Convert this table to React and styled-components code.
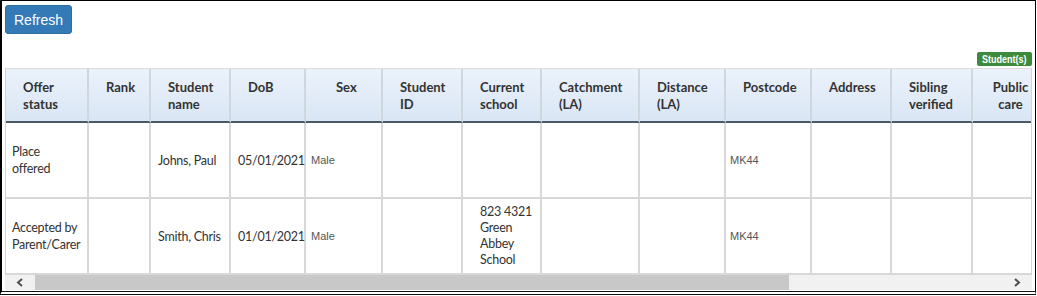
import React from "react";
import styled, { createGlobalStyle } from "styled-components";

const Global = createGlobalStyle`
  html, body { margin: 0; padding: 0; background: #fff; }
  * { box-sizing: border-box; }
`;

const Frame = styled.div`
  width: 1036px; height: 295px;
  border-left: 2px solid #000; border-top: 1px solid #000; border-right: 1px solid #000;
  border-bottom: 4px double #111;
  padding: 4px 3px 0 3px;
  display: flex; flex-direction: column;
  font-family: Lato, "Open Sans", sans-serif;
`;
const Toolbar = styled.div` display: flex; flex-shrink: 0; `;
const Button = styled.button`
  height: 29px; width: 67px; padding: 0;
  background: #337ab7; border: 1px solid #2e6da4; border-radius: 3px;
  color: #fff; font-family: "Liberation Sans", Arial, sans-serif; font-size: 14px;
  cursor: pointer;
`;
const BadgeRow = styled.div` display: flex; justify-content: flex-end; margin: 18px 0 3px; height: 13px; flex-shrink: 0; `;
const Badge = styled.span`
  display: flex; align-items: center; justify-content: center;
  background: #3c8a3c; color: #fff; border-radius: 2px; width: 55px; height: 14px;
  font-family: "Liberation Sans", Arial, sans-serif; font-weight: bold; font-size: 11px;
  span { display: inline-block; transform: scaleX(0.82); white-space: nowrap; }
`;
const Scroller = styled.div`
  width: 1027px; height: 207px; overflow: hidden; flex-shrink: 0;
  border-top: 1px solid #ddd; border-left: 1px solid #d4d4d4; border-right: 1px solid #d4d4d4;
`;
const Table = styled.table`
  border-collapse: separate; border-spacing: 0; table-layout: fixed; width: 1045px;
  color: #333;
`;
const Th = styled.th`
  box-sizing: border-box; height: 54px; vertical-align: top; text-align: ${p => p.$center ? "center" : "left"};
  padding: 10px ${p => p.$center ? "18px" : "4px"} 0 ${p => p.$pl || 17}px;
  font-size: 13px; font-weight: 700; line-height: 17px;
  background: linear-gradient(#ebf2fb, #d9e6f5);
  border-right: 2px solid #cfd6de; border-bottom: 2px solid #4b5866;
`;
const Td = styled.td`
  box-sizing: border-box; height: 76px; vertical-align: middle; white-space: nowrap;
  padding: 0 0 0 ${p => p.$pl || 7}px;
  font-size: 12.5px; letter-spacing: -0.25px; line-height: ${p => p.$lh || 17}px;
  border-right: 2px solid #d8d8d8; border-bottom: 2px solid #d8d8d8;
`;
const Small = styled.span`
  font-family: "Liberation Sans", Arial, sans-serif; font-size: 11px; letter-spacing: 0; color: #555;
`;
const ScrollBar = styled.div`
  width: 1027px; height: 15px; background: #f1f1f1; flex-shrink: 0;
  display: flex; align-items: center;
`;
const Arrow = styled.div` width: 30px; height: 15px; display: flex; align-items: center; justify-content: center; `;
const Track = styled.div` flex: 1; height: 15px; display: flex; `;
const Thumb = styled.div` width: 754px; height: 15px; background: #c8c8c8; `;

const cols = [
  { label: <>Offer<br />status</>, w: 83 },
  { label: "Rank", w: 62 },
  { label: <>Student<br />name</>, w: 80 },
  { label: "DoB", w: 75 },
  { label: "Sex", w: 77, pl: 30 },
  { label: <>Student<br />ID</>, w: 80 },
  { label: <>Current<br />school</>, w: 79 },
  { label: <>Catchment<br />(LA)</>, w: 98 },
  { label: <>Distance<br />(LA)</>, w: 86 },
  { label: "Postcode", w: 86 },
  { label: "Address", w: 80 },
  { label: <>Sibling<br />verified</>, w: 81 },
  { label: <>Public<br />care</>, w: 78, center: true },
];

const rows = [
  { status: <>Place<br />offered</>, name: "Johns, Paul", dob: "05/01/2021", sex: "Male", school: null, postcode: "MK44" },
  { status: <>Accepted by<br />Parent/Carer</>, name: "Smith, Chris", dob: "01/01/2021", sex: "Male", school: <>823 4321<br />Green<br />Abbey<br />School</>, postcode: "MK44" },
];

const Chevron = ({ dir }) => (
  <svg width="8" height="9" viewBox="0 0 8 9">
    <polyline points={dir === "left" ? "6,1 2,4.5 6,8" : "2,1 6,4.5 2,8"} fill="none" stroke="#505050" strokeWidth="2" />
  </svg>
);

export default function App() {
  return (
    <>
      <Global />
      <Frame>
        <Toolbar><Button>Refresh</Button></Toolbar>
        <BadgeRow><Badge><span>Student(s)</span></Badge></BadgeRow>
        <Scroller>
          <Table>
            <colgroup>{cols.map((c, i) => <col key={i} style={{ width: c.w }} />)}</colgroup>
            <thead>
              <tr>{cols.map((c, i) => <Th key={i} $pl={c.pl} $center={c.center}>{c.label}</Th>)}</tr>
            </thead>
            <tbody>
              {rows.map((r, i) => (
                <tr key={i}>
                  <Td $pl={6}>{r.status}</Td>
                  <Td />
                  <Td>{r.name}</Td>
                  <Td>{r.dob}</Td>
                  <Td $pl={5}><Small>{r.sex}</Small></Td>
                  <Td />
                  <Td $pl={17} $lh={16}>{r.school}</Td>
                  <Td />
                  <Td />
                  <Td $pl={4}><Small>{r.postcode}</Small></Td>
                  <Td />
                  <Td />
                  <Td />
                </tr>
              ))}
            </tbody>
          </Table>
        </Scroller>
        <ScrollBar>
          <Arrow><Chevron dir="left" /></Arrow>
          <Track><Thumb /></Track>
          <Arrow><Chevron dir="right" /></Arrow>
        </ScrollBar>
      </Frame>
    </>
  );
}
